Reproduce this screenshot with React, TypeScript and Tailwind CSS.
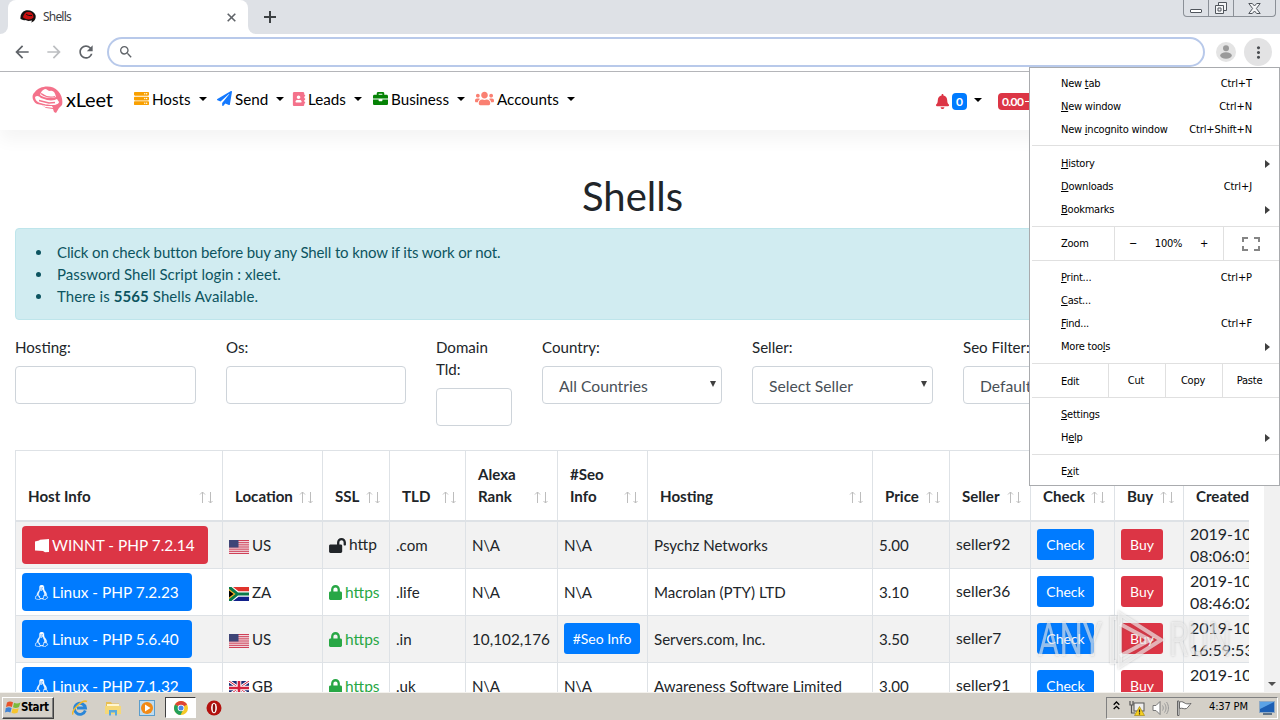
import type {ReactNode} from "react";
import {
  FaAddressBook,
  FaBell,
  FaBriefcase,
  FaLinux,
  FaLock,
  FaLockOpen,
  FaPaperPlane,
  FaServer,
  FaUsers,
} from "react-icons/fa";
import {
  MdArrowBack,
  MdArrowForward,
  MdMoreVert,
  MdRefresh,
  MdSearch,
} from "react-icons/md";

type Host = {
  os: "win" | "linux";
  info: string;
  country: string;
  ssl: boolean;
  tld: string;
  alexa: string;
  seo: boolean;
  hosting: string;
  price: string;
  seller: string;
  created: [string, string];
};

const hosts: Host[] = [
  {os: "win", info: "WINNT - PHP 7.2.14", country: "US", ssl: false, tld: ".com", alexa: "N\\A", seo: false, hosting: "Psychz Networks", price: "5.00", seller: "seller92", created: ["2019-10", "08:06:01"]},
  {os: "linux", info: "Linux - PHP 7.2.23", country: "ZA", ssl: true, tld: ".life", alexa: "N\\A", seo: false, hosting: "Macrolan (PTY) LTD", price: "3.10", seller: "seller36", created: ["2019-10", "08:46:02"]},
  {os: "linux", info: "Linux - PHP 5.6.40", country: "US", ssl: true, tld: ".in", alexa: "10,102,176", seo: true, hosting: "Servers.com, Inc.", price: "3.50", seller: "seller7", created: ["2019-10", "16:59:53"]},
  {os: "linux", info: "Linux - PHP 7.1.32", country: "GB", ssl: true, tld: ".uk", alexa: "N\\A", seo: false, hosting: "Awareness Software Limited", price: "3.00", seller: "seller91", created: ["2019-10", ""]},
];

const columns = ["Host Info", "Location", "SSL", "TLD", "Alexa Rank", "#Seo Info", "Hosting", "Price", "Seller", "Check", "Buy", "Created"];

const gridCols = "grid grid-cols-[207px_100px_67px_76px_92px_90px_225px_77px_81px_84px_69px_66px]";

function FaviconHat() {
  return (
    <svg width="16" height="14" viewBox="0 0 32 28">
      <path d="M1 18C0 10 4 3 11 1c8-2 17 2 20 9 1 5 0 9-3 12l-5 3-8-3-9-2z" fill="#141010"/>
      <path d="M6 14c2-7 6-11 11-10 6 0 10 4 10 11-3 4-10 5-15 3-3-1-5-2-6-4z" fill="#c90d0d"/>
      <path d="M12 8c1 2 7 4 12 3" fill="none" stroke="#141010" strokeWidth="2"/>
      <path d="M9 20l8 2 7-1-2 6-3-1-1-2-8-1z" fill="#fff"/>
    </svg>
  )
}

function HatLogo() {
  return (
    <svg width="31" height="27" viewBox="0 0 31 27">
      <path d="M5 18C0 15-1 9 3 6 7 0 20-2 26 5c4 4 5 10 4 14l-3 3-3 5-2-1-1-3-7-1-4-3z" fill="#f4728b"/>
      <path d="M3 11c2-2 4-1 6 1l6 2c5 1 8 0 10-1l2 3c0 1-2 3-6 3-6 0-9-1-13-2-3-1-5-3-5-6z" fill="#fff"/>
      <path d="M8 9c1-3 2-5 5-6 2 0 3 2 5 2 3-1 5 1 6 6-5 2-12 1-16-2z" fill="#fff"/>
      <path d="M9 7.500c4 3 9 4.500 14 3M7 14.500l10 2.500 6-.5" fill="none" stroke="#f4728b" strokeWidth="1.300"/>
      <path d="M10 19l5 1 5 0 1 2-3-.5-5-.5z" fill="#fff"/>
    </svg>
  )
}

function Caret() {
  return <span className="ml-2 border-x-[4.5px] border-t-[4.5px] border-x-transparent border-t-black"/>
}

function NavItem({icon, label, className}: { icon: ReactNode; label: string; className: string }) {
  return (
    <div className={`flex items-center text-black ${className}`}>
      {icon}
      <span className="ml-[3px] text-[15.2px]">{label}</span>
      <Caret/>
    </div>
  )
}

function Flag({country}: { country: string }) {
  if (country === "US") {
    return (
      <svg width="20" height="14" viewBox="0 0 20 14" className="shrink-0">
        <rect width="20" height="14" fill="#f3e9ec"/>
        {[0, 2.15, 4.3, 6.45, 8.6, 10.75, 12.9].map((y) => (
          <rect key={y} y={y} width="20" height="1.1" fill="#cf4057"/>
        ))}
        <rect width="9.5" height="7.5" fill="#3f4577"/>
      </svg>
    )
  }
  if (country === "ZA") {
    return (
      <svg width="20" height="14" viewBox="0 0 20 14" className="shrink-0">
        <rect width="20" height="14" fill="#fff"/>
        <path d="M4 0h16v4.3H9.5z" fill="#e0342c"/>
        <path d="M4 14h16V9.7H9.5z" fill="#12218b"/>
        <path d="M0 0h2.5L9 5.6h11v2.8H9L2.5 14H0z" fill="#0a7a4b"/>
        <path d="M0 2l6.5 5L0 12z" fill="#f5b32a"/>
        <path d="M0 3.6L4.6 7 0 10.4z" fill="#000"/>
      </svg>
    )
  }
  return (
    <svg width="20" height="14" viewBox="0 0 20 14" className="shrink-0">
      <rect width="20" height="14" fill="#1c2b73"/>
      <path d="M0 0l20 14M20 0L0 14" stroke="#fff" strokeWidth="2.8"/>
      <path d="M0 0l20 14M20 0L0 14" stroke="#d4213d" strokeWidth="1"/>
      <path d="M10 0v14M0 7h20" stroke="#fff" strokeWidth="4.6"/>
      <path d="M10 0v14M0 7h20" stroke="#d4213d" strokeWidth="2.6"/>
    </svg>
  )
}

function SortArrows() {
  return (
    <svg width="14" height="13" viewBox="0 0 14 13" fill="none" stroke="#bdbdbd" className="shrink-0">
      <path d="M3.5 12V1M1 3.5L3.5 1 6 3.5"/>
      <path d="M11.500 1v11M9.500 10l2 2 2-2"/>
    </svg>
  )
}

function WindowButtons() {
  return (
    <div className="flex h-[17px] w-[93px] rounded-b-[4px] border border-t-0 border-[#8b9097] bg-[#dee1e6]">
      <div className="flex w-[25px] items-end justify-center border-r border-[#8b9097] pb-[3px]">
        <span className="h-[4px] w-[12px] rounded-[1px] border border-[#50555c] bg-white"/>
      </div>
      <div className="flex w-[25px] items-center justify-center border-r border-[#8b9097]">
        <svg width="14" height="13" viewBox="0 0 14 13" fill="#f4f5f7" stroke="#50555c">
          <path d="M4.5 .5h8v8h-8z"/>
          <path d="M1.5 3.5h8v8h-8z"/>
          <path d="M4 6h3v3H4z"/>
        </svg>
      </div>
      <div className="flex flex-1 items-center justify-center">
        <svg width="13" height="11" viewBox="0 0 13 11" fill="#f4f5f7" stroke="#50555c">
          <path d="M.8 .5h3.500l2.200 2.500L8.700 .5h3.500L8.400 5.500l3.800 5H8.700L6.500 8l-2.200 2.500H.8l3.800-5z"/>
        </svg>
      </div>
    </div>
  )
}

function BrowserChrome() {
  return (
    <div className="shrink-0 font-['Noto_Sans',sans-serif]">
      <div className="flex h-[34px] items-start bg-[#dee1e6]">
        <div className="flex h-[34px] w-2 items-end bg-white">
          <div className="h-[34px] w-2 rounded-br-lg bg-[#dee1e6]"/>
        </div>
        <div className="flex h-[34px] w-[240px] items-center rounded-t-lg bg-white pl-3 pr-[12px]">
          <FaviconHat/>
          <span className="ml-[7px] flex-1 text-[12px] tracking-[-0.8px] text-[#3c4043]">Shells</span>
          <svg width="9" height="9" viewBox="0 0 9 9" stroke="#5f6368" strokeWidth="1.6">
            <path d="M.7 .7l7.600 7.600M8.300 .7L.7 8.300"/>
          </svg>
        </div>
        <div className="h-[34px] w-2 bg-white">
          <div className="h-[34px] w-2 rounded-bl-lg bg-[#dee1e6]"/>
        </div>
        <svg width="12" height="12" viewBox="0 0 12 12" className="ml-2 mt-[11px]" stroke="#3c4043" strokeWidth="2">
          <path d="M6 0v12M0 6h12"/>
        </svg>
        <div className="ml-auto mr-1">
          <WindowButtons/>
        </div>
      </div>
      <div className="flex h-[38px] items-center border-b border-[#b4b5b9] bg-white pb-px pl-3">
        <MdArrowBack className="size-5 text-[#5f6368]"/>
        <MdArrowForward className="ml-3 size-5 text-[#bcbec1]"/>
        <MdRefresh className="ml-3 size-5 text-[#5f6368]"/>
        <div className="ml-[11px] flex h-[30px] w-[1098px] items-center rounded-full border-2 border-[#b8c9ea] bg-white pl-[9px]">
          <MdSearch className="size-4 text-[#5f6368]"/>
        </div>
        <svg width="20" height="20" viewBox="0 0 20 20" className="ml-[11px]">
          <circle cx="10" cy="10" r="10" fill="#e4e4e4"/>
          <circle cx="10" cy="6.200" r="3" fill="#9a9a9a"/>
          <ellipse cx="10" cy="13.500" rx="5.800" ry="3.200" fill="#9a9a9a"/>
        </svg>
        <div className="ml-2 flex size-7 items-center justify-center rounded-full bg-[#e3e3e4]">
          <MdMoreVert className="size-[19px] text-[#4a4d51]"/>
        </div>
      </div>
    </div>
  )
}

function Navbar() {
  return (
    <div className="flex h-[58px] shrink-0 items-center pb-1 pl-[32px] shadow-[0_10px_16px_rgba(0,0,0,0.045)]">
      <HatLogo/>
      <span className="ml-[3px] w-[68px] text-[20px] tracking-[-0.2px] text-black">xLeet</span>
      <NavItem className="w-[83px]" icon={<FaServer className="size-[15px] text-[#f9a000]"/>} label="Hosts"/>
      <NavItem className="w-[75px]" icon={<FaPaperPlane className="size-[15px] text-[#1479ff]"/>} label="Send"/>
      <NavItem className="w-[81px]" icon={<FaAddressBook className="-mx-[0.5px] size-[14px] text-[#f4728b]"/>} label="Leads"/>
      <NavItem className="w-[102px]" icon={<FaBriefcase className="size-[15px] text-[#058205]"/>} label="Business"/>
      <NavItem className="w-[110px]" icon={<FaUsers className="size-[19px] text-[#fa8072]"/>} label="Accounts"/>
      <div className="ml-[350px] mt-[5px] flex items-center">
        <FaBell className="size-[15px] text-[#dc3545]"/>
        <span className="ml-[2px] flex h-[17px] w-[15px] items-center justify-center rounded bg-[#007bff] text-[12px] font-bold text-white">0</span>
        <span className="-ml-px -mt-[3px] flex"><Caret/></span>
      </div>
      <span className="ml-4 mt-[5px] flex h-[17px] w-[60px] items-center rounded bg-[#dc3545] px-[4px] text-[12px] font-bold tracking-[-0.6px] text-white">0.00</span>
      <span className="-ml-[33px] mt-[5px] h-px w-[6px] bg-white"/>
    </div>
  )
}

function Field({label, className, value}: { label: string; className: string; value?: string }) {
  return (
    <div className={`shrink-0 ${className}`}>
      <div className="mb-2 mt-[-1px] leading-[22px]">{label}</div>
      <div className="flex h-[38px] items-center justify-between rounded border border-[#ced4da] bg-white pl-4 pr-[5px] pt-[3px] text-[15.7px] text-[#495057]">
        {value && (
          <>
            <span>{value}</span>
            <span className="mt-[-5px] border-x-[3px] border-t-[6px] border-x-transparent border-t-[#404040]"/>
          </>
        )}
      </div>
    </div>
  )
}

function Cell({children}: { children?: ReactNode }) {
  return <div className="flex items-center whitespace-nowrap border-l border-[#dee2e6] pl-[6px]">{children}</div>
}

function HostButton({host}: { host: Host }) {
  if (host.os === "win") {
    return (
      <div className="flex h-[38px] w-[186px] items-center rounded bg-[#dc3545] pl-[13px] pt-px text-[15.4px] text-white">
        <svg width="14" height="14" viewBox="0 0 14 14" className="mr-[3px]" fill="#fff">
          <path d="M0 2.500L4 1.500 5 .8 14 0v13l-4 .3L8 12 0 11.500z"/>
        </svg>
        {host.info}
      </div>
    )
  }
  return (
    <div className="flex h-[38px] w-[170px] items-center rounded bg-[#007bff] pl-[12px] pt-px text-[15.4px] text-white">
      <FaLinux className="mr-[3px] size-[15px]" stroke="#fff" strokeWidth="12"/>
      {host.info}
    </div>
  )
}

function SmallButton({label, className}: { label: string; className: string }) {
  return (
    <span className={`mb-[2px] flex h-[31px] items-center justify-center rounded-[3px] text-[14px] text-white ${className}`}>{label}</span>
  )
}

function HostRow({host, striped}: { host: Host; striped: boolean }) {
  return (
    <div className={`${gridCols} h-[47px] border-b border-[#dee2e6] ${striped ? "bg-[#f2f2f2]" : "bg-white"}`}>
      <Cell><HostButton host={host}/></Cell>
      <Cell>
        <span className="mt-1"><Flag country={host.country}/></span>
        <span className="ml-[3px]">{host.country}</span>
      </Cell>
      <Cell>
        {host.ssl ? (
          <span className="flex items-center pt-px text-[15.5px] text-[#28a745]"><FaLock className="mr-[3px] h-[15px] w-[13px]"/>https</span>
        ) : (
          <span className="flex items-center text-[15.5px]"><FaLockOpen className="mr-[3px] h-[15px] w-[17px]"/>http</span>
        )}
      </Cell>
      <Cell>{host.tld}</Cell>
      <Cell><span className={host.seo ? "text-[15.3px]" : "tracking-[-0.3px]"}>{host.alexa}</span></Cell>
      <Cell>
        {host.seo ? <SmallButton label="#Seo Info" className="w-[76px] bg-[#007bff]"/> : <span className="tracking-[-0.3px]">{"N\\A"}</span>}
      </Cell>
      <Cell><span>{host.hosting}</span></Cell>
      <Cell>{host.price}</Cell>
      <Cell><span className="text-[15.6px]">{host.seller}</span></Cell>
      <Cell><SmallButton label="Check" className="w-[57px] bg-[#007bff]"/></Cell>
      <Cell><SmallButton label="Buy" className="w-[42px] bg-[#dc3545]"/></Cell>
      <Cell>
        <div className="h-[44px] text-[16px] leading-[22px]">
          {host.created[0]}
          <br/>
          {host.created[1]}
        </div>
      </Cell>
    </div>
  )
}

function HostTable() {
  return (
    <div className="ml-[15px] mt-6 w-[1234px] overflow-hidden">
      <div className="w-max border-t border-[#dee2e6]">
        <div className={`${gridCols} h-[71px] border-b-2 border-[#dee2e6]`}>
          {columns.map((name) => (
            <div key={name} className="flex items-end justify-between border-l border-[#dee2e6] pb-[13px] pl-3 pr-[9px] font-bold leading-[22px]">
              <span className={name === "Alexa Rank" || name === "#Seo Info" ? "w-12" : "whitespace-nowrap"}>{name}</span>
              {name !== "Created" && <span className="mb-[3px]"><SortArrows/></span>}
            </div>
          ))}
        </div>
        {hosts.map((host, index) => (
          <HostRow key={host.info} host={host} striped={index % 2 === 0}/>
        ))}
      </div>
    </div>
  )
}

function NoticeLine({children, className}: { children: ReactNode; className: string }) {
  return (
    <li className={`flex items-center ${className}`}>
      <span className="mr-[16px] size-[5px] rounded-full bg-[#0c5460]"/>
      <span>{children}</span>
    </li>
  )
}

function Page() {
  return (
    <div className="flex min-h-0 flex-1 overflow-hidden bg-white font-['Lato',sans-serif] text-[15.1px] text-[#212529]">
      <div className="flex w-[1264px] flex-col">
        <Navbar/>
        <h1 className="mt-[42px] h-[48px] pl-px text-center text-[40px] leading-[48px]">Shells</h1>
        <div className="mx-[15px] mt-2 h-[92px] shrink-0 rounded border border-[#bee5eb] bg-[#d1ecf1] pt-[12px] text-[#0c5460]">
          <ul className="pl-[20px] text-[15px] leading-[22px]">
            <NoticeLine className="tracking-[-0.13px]">Click on check button before buy any Shell to know if its work or not.</NoticeLine>
            <NoticeLine className="tracking-[0.03px]">Password Shell Script login : xleet.</NoticeLine>
            <NoticeLine className="tracking-[0.09px]">There is <b>5565</b> Shells Available.</NoticeLine>
          </ul>
        </div>
        <div className="ml-[15px] mt-[17px] flex shrink-0 items-start gap-[30px]">
          <Field label="Hosting:" className="w-[181px]"/>
          <Field label="Os:" className="w-[180px]"/>
          <Field label="Domain Tld:" className="w-[76px]"/>
          <Field label="Country:" value="All Countries" className="w-[180px]"/>
          <Field label="Seller:" value="Select Seller" className="w-[181px]"/>
          <Field label="Seo Filter:" value="Default" className="w-[181px]"/>
        </div>
        <HostTable/>
      </div>
      <div className="flex w-4 items-end justify-center bg-[#f1f1f1] pb-[6px]">
        <span className="border-x-4 border-t-4 border-x-transparent border-t-[#505050]"/>
      </div>
    </div>
  )
}

function MenuItem({before = "", hot = "", after = "", keys, sub}: {
  before?: string;
  hot?: string;
  after?: string;
  keys?: string;
  sub?: boolean
}) {
  return (
    <div className="flex h-[23px] items-center pl-[29px] pr-[9px] pt-[2px]">
      <span className="flex-1 whitespace-pre">{before}<span className="underline underline-offset-1">{hot}</span>{after}</span>
      {keys && <span className="pr-[18px] tracking-[-0.1px]">{keys}</span>}
      {sub && <span className="mt-[-2px] border-y-4 border-l-[5px] border-y-transparent border-l-[#404040]"/>}
    </div>
  )
}

function ChromeMenu() {
  return (
    <div className="absolute left-[1029px] top-[67px] h-[419px] w-[251px] divide-y divide-[#e0e0e0] border border-[#a9abae] bg-white pl-[2px] font-['DejaVu_Sans_Condensed','DejaVu_Sans',sans-serif] text-[11px] tracking-[-0.23px] text-black [font-stretch:condensed]">
      <div className="pb-[4px] pt-[4px]">
        <MenuItem before="New " hot="t" after="ab" keys="Ctrl+T"/>
        <MenuItem hot="N" after="ew window" keys="Ctrl+N"/>
        <MenuItem before="New " hot="i" after="ncognito window" keys="Ctrl+Shift+N"/>
      </div>
      <div className="pb-[5px] pt-[6px]">
        <MenuItem hot="H" after="istory" sub/>
        <MenuItem hot="D" after="ownloads" keys="Ctrl+J"/>
        <MenuItem hot="B" after="ookmarks" sub/>
      </div>
      <div className="flex h-[34px] items-center divide-x divide-[#e0e0e0]">
        <span className="flex h-full w-[83px] items-center pl-[29px] pt-[2px]">Zoom</span>
        <span className="flex h-full w-[109px] items-center justify-between pl-[14px] pr-[15px] pt-px">
          <span>−</span><span>100%</span><span>+</span>
        </span>
        <span className="flex h-full flex-1 items-center justify-center pr-[2px]">
          <svg width="18" height="14" viewBox="0 0 18 14" fill="none" stroke="#858585" strokeWidth="2">
            <path d="M1 5V1h5M12 1h5v4M17 9v4h-5M6 13H1V9"/>
          </svg>
        </span>
      </div>
      <div className="pb-[5px] pt-[5px]">
        <MenuItem hot="P" after="rint..." keys="Ctrl+P"/>
        <MenuItem hot="C" after="ast..."/>
        <MenuItem hot="F" after="ind..." keys="Ctrl+F"/>
        <MenuItem before="More too" hot="l" after="s" sub/>
      </div>
      <div className="flex h-[34px] items-center divide-x divide-[#e0e0e0]">
        <span className="flex h-full w-[77px] items-center pl-[29px] pt-[3px]">Edit</span>
        <span className="flex h-full w-[57px] items-center justify-center pr-[2px] pt-px">Cut</span>
        <span className="flex h-full w-[57px] items-center justify-center pr-[2px] pt-px">Copy</span>
        <span className="flex h-full flex-1 items-center justify-center pr-[3px] pt-px">Paste</span>
      </div>
      <div className="pb-[5px] pt-[5px]">
        <MenuItem hot="S" after="ettings"/>
        <MenuItem before="H" hot="e" after="lp" sub/>
      </div>
      <div className="pt-[5px]">
        <MenuItem before="E" hot="x" after="it"/>
      </div>
    </div>
  )
}

function Watermark() {
  return (
    <div className="absolute left-[1038px] top-[610px] flex h-[60px] items-center font-['Roboto',sans-serif] text-[49px] text-white/55 [text-shadow:0_0_3px_rgba(90,90,90,0.3)]">
      <span className="w-[70px] origin-left scale-x-[0.67]">ANY</span>
      <svg width="56" height="60" viewBox="0 0 56 60" fill="none" stroke="#fff" strokeOpacity="0.6" strokeWidth="4" className="shrink-0 drop-shadow-[0_0_1px_rgba(90,90,90,0.5)]">
        <path d="M8 8H4v44h4"/>
        <path d="M12 4l41 26-41 26z"/>
        <path d="M12 14l30 16-30 16"/>
      </svg>
      <span className="ml-[5px] w-[64px] origin-left scale-x-[0.64]">RUN</span>
    </div>
  )
}

function Taskbar() {
  return (
    <div className="flex h-[28px] shrink-0 items-center border-t border-[#f4f2ee] bg-[#d4d0c8] pl-[2px] pt-[2px]">
      <div className="flex h-[22px] w-[52px] items-center border border-b-[#404040] border-l-white border-r-[#404040] border-t-white pl-[2px] shadow-[inset_-1px_-1px_0_#808080]">
        <svg width="16" height="15" viewBox="0 0 16 15" className="shrink-0">
          <path d="M2 2.500C4 1 6 1.200 8 2.300L6.900 7C5 6 3 6 1 7z" fill="#e8532a"/>
          <path d="M9 2.700c2 1 4 1 6.500-.2L14 7c-2 1.100-4 1.200-6 .3z" fill="#7cba3b"/>
          <path d="M.8 8c2-1 4-1 5.800 0l-1.200 4.500c-2-1-3.600-1-5.400 0z" fill="#3f83d5"/>
          <path d="M7.700 8.300c2 1 4 .9 6-.1l-1.200 4.500c-2 1-4 1.200-6 .1z" fill="#f7c52e"/>
        </svg>
        <span className="font-['DejaVu_Sans_Condensed','DejaVu_Sans',sans-serif] text-[11.5px] font-bold tracking-[-0.4px] text-black">Start</span>
      </div>
      <svg width="16" height="16" viewBox="0 0 16 16" className="ml-[18px]" fill="none">
        <path d="M13.300 10.500A5.500 5.500 0 1 1 13.500 8H5" stroke="#2a86d8" strokeWidth="2.800"/>
        <path d="M1 14.500C-1 11 10-1 15 1.500" stroke="#f2b92c" strokeWidth="1.600"/>
      </svg>
      <svg width="16" height="16" viewBox="0 0 16 16" className="ml-[17px]">
        <path d="M1 2h5l1 1.500h7V14H1z" fill="#e9bf52"/>
        <path d="M2 4h12v3H2z" fill="#fff6d0"/>
        <path d="M0 6h16v8H0z" fill="#f5d878"/>
        <path d="M4 15.500V10h8v5.500h-2V12.500H6v3z" fill="#5aa9dd"/>
      </svg>
      <svg width="16" height="16" viewBox="0 0 16 16" className="ml-[18px]">
        <rect x=".5" y=".5" width="15" height="15" fill="#bfdcf0" stroke="#5b9dcc"/>
        <circle cx="8" cy="8" r="6" fill="#f28a16"/>
        <path d="M6 4.500L11.500 8 6 11.500z" fill="#fff"/>
      </svg>
      <div className="ml-[10px] flex h-[21px] w-[31px] items-center justify-center border border-b-white border-l-[#404040] border-r-white border-t-[#404040] bg-white">
        <svg width="14" height="14" viewBox="0 0 14 14">
          <circle cx="7" cy="7" r="7" fill="#f6c927"/>
          <path d="M7 7L.95 3.500A7 7 0 0 1 13.050 3.500z" fill="#dd4436"/>
          <path d="M7 7L.95 3.500A7 7 0 0 0 6.500 14L9 9z" fill="#23a05a"/>
          <circle cx="7" cy="7" r="3.300" fill="#fff"/>
          <circle cx="7" cy="7" r="2.500" fill="#4a86e8"/>
        </svg>
      </div>
      <svg width="16" height="16" viewBox="0 0 16 16" className="ml-[10px]">
        <circle cx="8" cy="8" r="7.500" fill="#b3120f"/>
        <ellipse cx="8" cy="8" rx="2.900" ry="5.200" fill="#fff"/>
        <ellipse cx="8" cy="8" rx="1.300" ry="4.200" fill="#8a0f0d"/>
      </svg>
      <div className="ml-auto mr-[2px] flex h-[22px] w-[172px] items-center border border-b-white border-l-[#808080] border-r-white border-t-[#808080]">
        <svg width="7" height="9" viewBox="0 0 7 9" className="mb-1 ml-[6px]" fill="none" stroke="#000" strokeWidth="1.300">
          <path d="M.7 3.700l2.800-2.700 2.800 2.700M.7 8l2.800-2.700L6.300 8"/>
        </svg>
        <svg width="16" height="16" viewBox="0 0 16 16" className="ml-[9px]">
          <path d="M1 1v4h3V1M2.500 5v8H6" fill="none" stroke="#555" strokeWidth="1.200"/>
          <rect x="5" y="3" width="10" height="8" fill="#eee" stroke="#555"/>
          <path d="M10.500 6.500L15.500 15.500H5.500z" fill="#f6cf21" stroke="#9b7d06" strokeWidth=".6"/>
          <path d="M10.500 9.500v3M10.500 13.300v1.200" stroke="#222" strokeWidth="1.200"/>
        </svg>
        <svg width="17" height="16" viewBox="0 0 17 16" className="ml-[7px]" fill="none" stroke="#777">
          <path d="M1 5.500h3L8 1.500v13L4 10.500H1z" fill="#fff"/>
          <path d="M10.500 5.500c1 1.500 1 3.500 0 5M12.500 3.500c2 2.800 2 6.200 0 9M14.500 2c2.600 3.600 2.600 8.400 0 12" stroke="#999"/>
        </svg>
        <svg width="16" height="16" viewBox="0 0 16 16" className="ml-[7px]" fill="#fff" stroke="#666">
          <path d="M1.500 1v14.500h1.500V1z"/>
          <path d="M3.500 2c3-1 4 .5 6 1.500 1.500.5 3 .5 5.500 0-1.500 1.500-2.500 3.500-4.500 5C8 9.500 6.500 7.500 3.500 8.500z"/>
        </svg>
        <span className="ml-[17px] font-['DejaVu_Sans_Condensed','DejaVu_Sans',sans-serif] text-[11px] tracking-[-0.15px] text-black">4:37 PM</span>
        <svg width="16" height="14" viewBox="0 0 16 14" className="ml-auto mr-[2px]">
          <rect x=".5" y=".5" width="15" height="11" fill="#1d5fb4" stroke="#8fa9c4"/>
          <path d="M1 1h14L1 8z" fill="#5ba2e6"/>
          <path d="M4 13h9" stroke="#3a5470" strokeWidth="1.500"/>
        </svg>
      </div>
    </div>
  )
}

export default function App() {
  return (
    <div className="relative flex h-[720px] w-[1280px] flex-col overflow-hidden bg-white">
      <BrowserChrome/>
      <Page/>
      <Taskbar/>
      <Watermark/>
      <ChromeMenu/>
    </div>
  )
}
